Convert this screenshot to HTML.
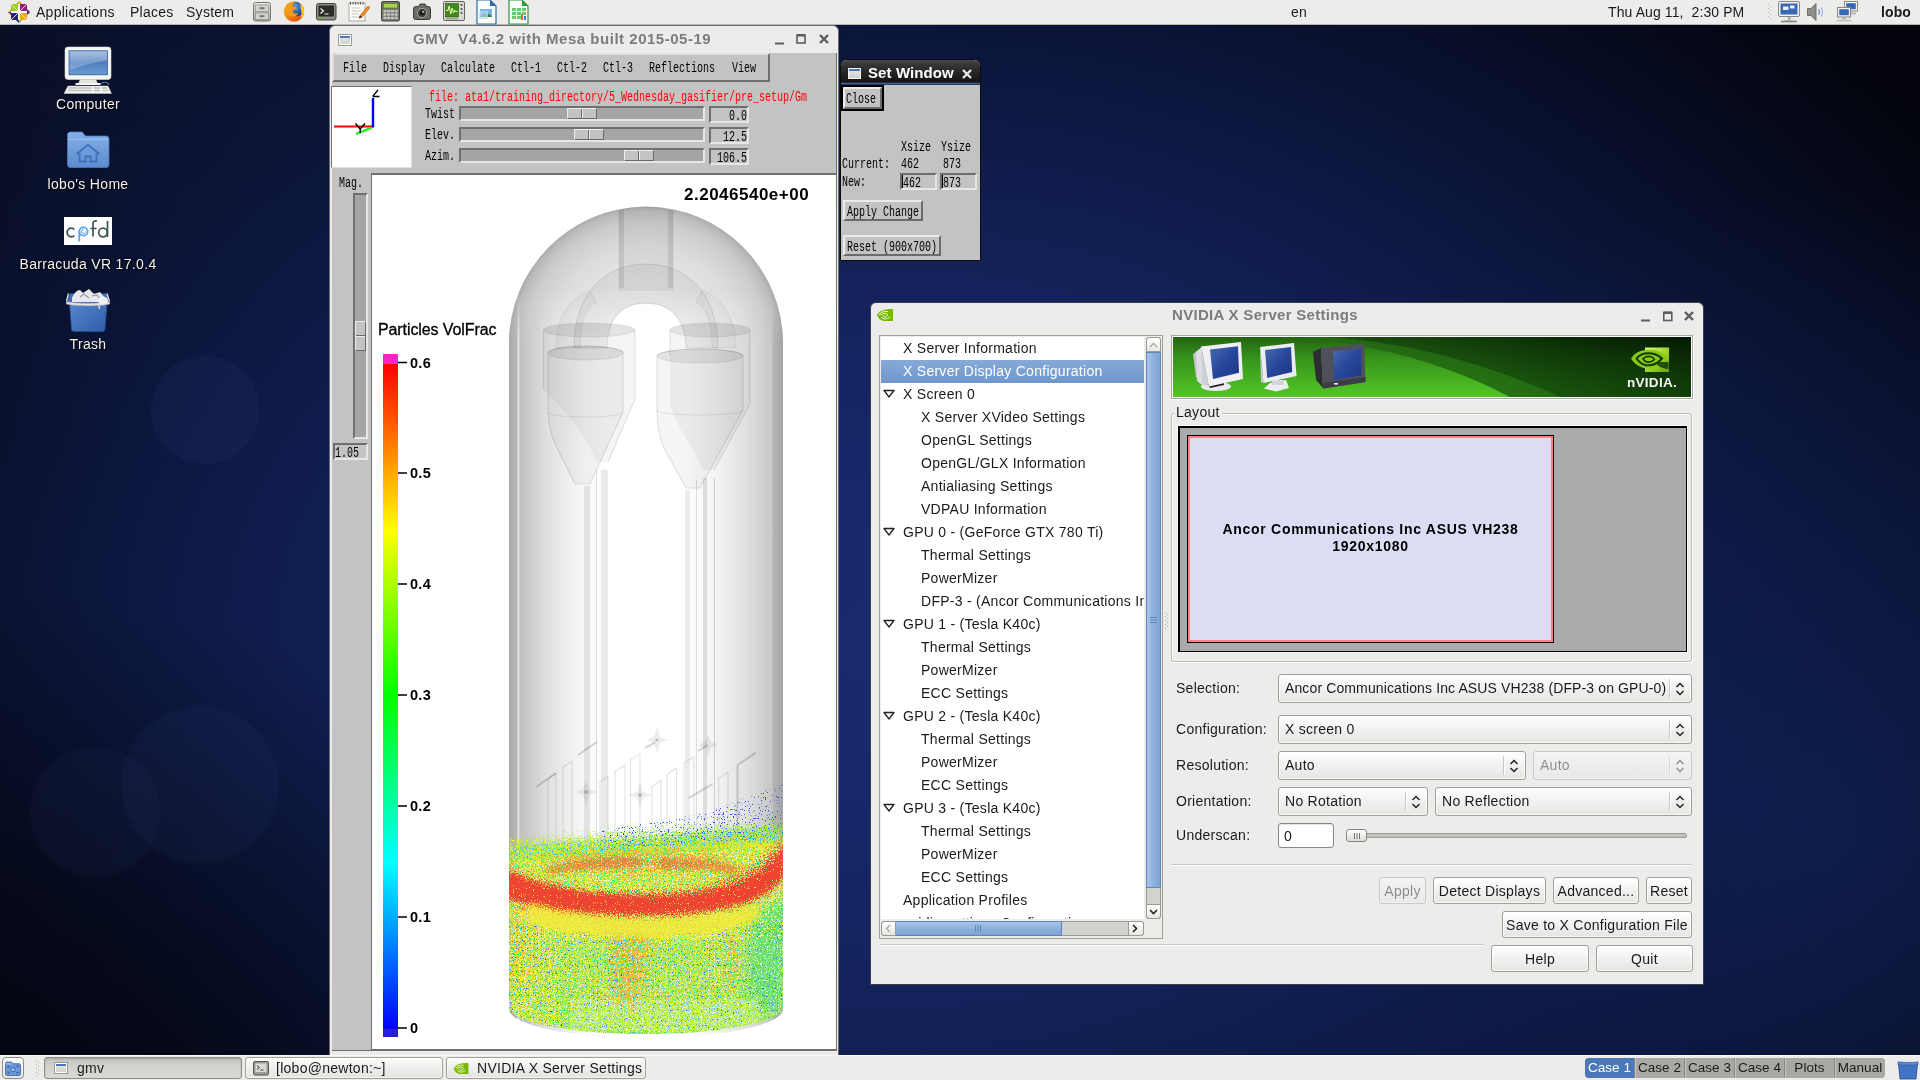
<!DOCTYPE html>
<html><head><meta charset="utf-8"><title>desktop</title>
<style>
*{box-sizing:border-box;margin:0;padding:0}
html,body{width:1920px;height:1080px;overflow:hidden}
body{position:relative;font-family:"Liberation Sans",sans-serif;font-size:14px;letter-spacing:.27px;color:#1a1a1a;
background:#0c1636;}
.abs,.abs *{position:absolute}
.t{white-space:pre;line-height:16px;height:16px}
.b{font-weight:700}
/* background */
#bg{left:0;top:0;width:1920px;height:1080px;
background:
radial-gradient(circle 55px at 205px 410px,rgba(120,150,255,.045) 0,rgba(120,150,255,.045) 96%,transparent 100%),
radial-gradient(circle 80px at 200px 785px,rgba(120,150,255,.04) 0,rgba(120,150,255,.04) 96%,transparent 100%),
radial-gradient(circle 66px at 95px 812px,rgba(120,150,255,.03) 0,rgba(120,150,255,.03) 96%,transparent 100%),
radial-gradient(ellipse 800px 480px at 120px -40px,rgba(16,28,70,.5) 0%,rgba(16,28,70,.25) 50%,rgba(16,28,70,0) 100%),
radial-gradient(ellipse 760px 560px at -60px 1140px,rgba(2,3,10,.85) 0%,rgba(2,3,10,.55) 45%,rgba(2,3,10,0) 100%),
radial-gradient(ellipse 720px 640px at 1830px 830px,rgba(18,36,92,.66) 0%,rgba(16,32,84,.45) 45%,rgba(14,28,74,0) 100%),
radial-gradient(ellipse 1250px 900px at 900px 640px,#192b6c 0%,#17286a 18%,#13225a 40%,#0d1841 62%,#070c22 85%,#03040c 100%);}
#top,#bot,#gmv,#sw,#nv,.dl{will-change:transform}
/* panels */
#top{left:0;top:0;width:1920px;height:25px;background:#edeceb;border-bottom:1px solid #b9b6b0}
#bot{left:0;top:1055px;width:1920px;height:25px;background:#edeceb;border-top:1px solid #f8f8f7}
/* mono bitmap-ish */
.m{font-family:"Liberation Mono",monospace;font-size:14px;letter-spacing:0;white-space:pre;line-height:15px;height:15px;transform:scaleX(.7143);transform-origin:0 0;color:#000}
</style></head><body>
<div id="bg" class="abs"></div>

<!--TOP-->
<div id="top" class="abs">
<span class="t" style="left:36px;top:4px">Applications</span>
<span class="t" style="left:130px;top:4px">Places</span>
<span class="t" style="left:186px;top:4px">System</span>
<span class="t" style="left:1291px;top:4px">en</span>
<span class="t" style="left:1608px;top:4px;letter-spacing:.1px">Thu Aug 11,  2:30 PM</span>
<span class="t b" style="left:1881px;top:4px;letter-spacing:.1px">lobo</span>
<svg style="left:0;top:0" width="540" height="25" viewBox="0 0 540 25">
<defs>
<linearGradient id="gy" x1="0" y1="0" x2="0" y2="1"><stop offset="0" stop-color="#e8e8e6"/><stop offset="1" stop-color="#a8a8a4"/></linearGradient>
<radialGradient id="ff" cx=".4" cy=".35" r=".7"><stop offset="0" stop-color="#5aa0e8"/><stop offset=".6" stop-color="#2a5cb0"/><stop offset="1" stop-color="#1a3a80"/></radialGradient>
<linearGradient id="fx" x1="0" y1="0" x2="1" y2="1"><stop offset="0" stop-color="#ffc820"/><stop offset=".5" stop-color="#f08010"/><stop offset="1" stop-color="#d84008"/></linearGradient>
</defs>
<!-- centos -->
<g transform="translate(19 12)">
<path d="M0-11l3 3h-6zM0 11l3-3h-6zM-11 0l3-3v6zM11 0l-3-3v6z" fill="#9ccd2a"/>
<path d="M-8-8h7v7h-7z" fill="#9ccd2a"/><path d="M1-8h7v7h-7z" fill="#932279"/><path d="M1 1h7v7h-7z" fill="#efa724"/><path d="M-8 1h7v7h-7z" fill="#262577"/>
<path d="M0-11l3 3h-3z M0-11" fill="#efa724"/><path d="M11 0l-3-3v3z" fill="#932279"/><path d="M0 11l-3-3h3z" fill="#262577"/><path d="M-11 0l3 3v-3z" fill="#932279"/><path d="M11 0l-3 3v-3z" fill="#262577"/><path d="M0 11l3-3h-3z" fill="#9ccd2a"/>
<path d="M-8-8l7 7M8-8l-7 7M-8 8l7-7M8 8l-7-7" stroke="#fff" stroke-width="1" opacity=".8"/><path d="M0-8v16M-8 0h16" stroke="#fff" stroke-width=".9" opacity=".9"/>
</g>
<!-- file cabinet -->
<rect x="253.500" y="2.500" width="17" height="18.500" rx="2" fill="url(#gy)" stroke="#77776f"/><rect x="255.500" y="5" width="13" height="6.500" fill="#d4d4d0" stroke="#88887f" stroke-width=".7"/><rect x="255.500" y="13" width="13" height="6.500" fill="#d4d4d0" stroke="#88887f" stroke-width=".7"/><rect x="259.500" y="7.200" width="5" height="2" fill="#77776f"/><rect x="259.500" y="15.200" width="5" height="2" fill="#77776f"/>
<!-- firefox -->
<clipPath id="ffc"><circle cx="294" cy="11.500" r="10.200"/></clipPath>
<circle cx="294" cy="11.500" r="10.200" fill="url(#fx)"/>
<g clip-path="url(#ffc)"><circle cx="296.500" cy="9" r="7.300" fill="url(#ff)"/><path d="M286 6c2-3 6-4.500 9-3-2 1-3 2.500-2.500 4 2-.5 4 .5 4.500 2.500-2.500-.5-4 .500-4 2 .5 2 3 3 5.500 1.500-1 3-5 4.500-8.500 3-3.500-1.500-5-5.500-4-10z" fill="#f29a1c"/><path d="M300 2c3 2 5 6 4.200 10.500-.8 3-2.200 5-4.200 6.500 1.500-3 2-6 1-9-.5-3-.5-5.500-1-8z" fill="#ffc62a"/></g>
<!-- terminal -->
<rect x="316.500" y="3.500" width="19.500" height="16.500" rx="2" fill="#8a8a86" stroke="#44443f"/><rect x="318.500" y="5.500" width="15.500" height="11" fill="#2a2c2a"/><path d="M320.500 8.500l3 2.500-3 2.500M324.500 14h4" stroke="#f0f0f0" stroke-width="1.200" fill="none"/><rect x="319" y="17.600" width="3" height="1.200" fill="#6ac82a"/>
<!-- notepad -->
<rect x="349" y="3" width="16" height="18" fill="#fbfbf8" stroke="#9a9a94" stroke-width=".8"/><path d="M350.500 2v2.500M353 2v2.500M355.500 2v2.500M358 2v2.500M360.500 2v2.500M363 2v2.500" stroke="#55554f" stroke-width="1"/><path d="M351.500 8h8M351.500 11h10M351.500 14h7M351.500 17h9" stroke="#c4c4be" stroke-width="1"/><path d="M360 15.500l8-9.500 2 1.600-8 9.600-2.800 1z" fill="#f08a18" stroke="#b85c08" stroke-width=".6"/><path d="M359.200 18.200l.8-2.700 2 1.700z" fill="#222"/>
<!-- calculator -->
<rect x="381.500" y="1.500" width="18" height="19.500" rx="1.500" fill="#77776f" stroke="#44443f"/><rect x="383.500" y="3.500" width="14" height="4.500" fill="#a4d84a" stroke="#4a6a1a" stroke-width=".6"/><g fill="#c8c8c2"><rect x="383.500" y="10" width="3" height="2.300"/><rect x="387.200" y="10" width="3" height="2.300"/><rect x="390.900" y="10" width="3" height="2.300"/><rect x="394.600" y="10" width="3" height="2.300"/><rect x="383.500" y="13.400" width="3" height="2.300"/><rect x="387.200" y="13.400" width="3" height="2.300"/><rect x="390.900" y="13.400" width="3" height="2.300"/><rect x="394.600" y="13.400" width="3" height="2.300"/><rect x="383.500" y="16.800" width="3" height="2.300"/><rect x="387.200" y="16.800" width="3" height="2.300"/><rect x="390.900" y="16.800" width="3" height="2.300"/><rect x="394.600" y="16.800" width="3" height="2.300"/></g>
<!-- camera -->
<path d="M413.500 8.500c0-1 .8-2 2-2h3l1.500-2.500h5l1.500 2.500h2c1.200 0 2 1 2 2v9c0 1-.8 2-2 2h-13c-1.200 0-2-1-2-2z" fill="#6c6c68" stroke="#3a3a36"/><circle cx="422" cy="13" r="4.600" fill="#3a3a38" stroke="#a8a8a4" stroke-width="1"/><circle cx="422" cy="13" r="2" fill="#111"/><circle cx="423" cy="12" r=".9" fill="#ddd"/>
<!-- sysmon -->
<rect x="443.500" y="1.500" width="21" height="19" rx="1.500" fill="#d8d8d4" stroke="#66665f"/><rect x="445.500" y="3.500" width="13" height="13.500" fill="#3f8a1a" stroke="#2a5a0c" stroke-width=".6"/><path d="M446 10.500h2l1.200-4.500 1.500 8 1.500-6 1.300 5 1.200-3 1 1.500h1.800" stroke="#e8ffb0" stroke-width="1" fill="none"/><g fill="#55554f"><circle cx="461.500" cy="5" r="1.100"/><circle cx="461.500" cy="9" r="1.100"/><circle cx="461.500" cy="13" r="1.100"/></g><path d="M446 18.800h12" stroke="#88887f" stroke-width="1"/>
<!-- doc blue -->
<path d="M477 0h13l6 6v18h-19z" fill="#fdfdfd" stroke="#2a6aa8" stroke-width="1.200"/><path d="M490 0l6 6h-6z" fill="#2a6aa8"/><rect x="480" y="9" width="12" height="8" fill="#7ab4e8"/><path d="M480 17l4-4.500 3 3 2-2 3 3.500z" fill="#3a7a3a"/><rect x="479" y="11" width="9" height="8" fill="#b8d8f4" opacity=".7"/>
<!-- sheet green -->
<path d="M509 0h13l6 6v18h-19z" fill="#fdfdfd" stroke="#2a9a3a" stroke-width="1.200"/><path d="M522 0l6 6h-6z" fill="#2a9a3a"/><g fill="#6ac86a"><rect x="512" y="8" width="4" height="3"/><rect x="517" y="8" width="4" height="3"/><rect x="522" y="8" width="4" height="3"/><rect x="512" y="12" width="4" height="3"/><rect x="517" y="12" width="4" height="3"/><rect x="522" y="12" width="4" height="3"/><rect x="512" y="16" width="4" height="3"/><rect x="517" y="16" width="4" height="3"/></g><rect x="521" y="14" width="2" height="6" fill="#e86a2a"/><rect x="524" y="16" width="2" height="4" fill="#3a7ae8"/>
</svg>
<svg style="left:1760px;top:0" width="110" height="25" viewBox="1760 0 110 25">
<g fill="#b8b6b0"><rect x="1768" y="4" width="1" height="1"/><rect x="1770" y="6" width="1" height="1"/><rect x="1768" y="8" width="1" height="1"/><rect x="1770" y="10" width="1" height="1"/><rect x="1768" y="12" width="1" height="1"/><rect x="1770" y="14" width="1" height="1"/><rect x="1768" y="16" width="1" height="1"/><rect x="1770" y="18" width="1" height="1"/></g>
<rect x="1778.500" y="1.500" width="21" height="15" rx="1.500" fill="#f2f2f0" stroke="#88887f"/><rect x="1780.500" y="3.500" width="17" height="11" fill="#3a68b4"/><rect x="1783" y="6.500" width="5.500" height="3.500" fill="#e8eef8"/><rect x="1790" y="5.500" width="4.500" height="3" fill="#e8eef8"/><path d="M1788 17h2.500v3h-2.500z" fill="#a8a8a4"/><path d="M1781 21.500h16" stroke="#88887f" stroke-width="1.600"/><path d="M1784 20.500h10" stroke="#b8b8b4" stroke-width="1"/>
<path d="M1807.500 8.500h3.500l5-5v17l-5-5h-3.500z" fill="#8e8e8a" stroke="#5a5a56" stroke-width=".8"/><path d="M1818.500 9.500c1.200 1.500 1.200 3.500 0 5" stroke="#6a94d4" stroke-width="1.300" fill="none"/><path d="M1821 7.500c2 2.500 2 6.500 0 9" stroke="#6a94d4" stroke-width="1.200" fill="none" opacity=".6"/>
<rect x="1844.500" y="1.500" width="13" height="9.500" fill="#f2f2f0" stroke="#88887f"/><rect x="1846.200" y="3.200" width="9.600" height="6" fill="#3a68b4"/><path d="M1848 13.500h8" stroke="#b8b8b4" stroke-width="2"/>
<rect x="1837.500" y="7.500" width="13" height="9.500" fill="#f2f2f0" stroke="#88887f"/><rect x="1839.200" y="9.200" width="9.600" height="6" fill="#3a68b4"/><path d="M1842.500 17.500h3v2h-3z" fill="#a8a8a4"/><path d="M1837 20.500h14" stroke="#c4c4c0" stroke-width="2"/>
</svg>

</div>

<style>
.dl{position:absolute;white-space:pre;color:#f2f2f2;font-size:14px;letter-spacing:.33px;line-height:16px;height:16px;text-align:center;text-shadow:1px 1px 1px #000,0 0 2px #000}
</style>
<svg class="abs" style="position:absolute;left:60px;top:44px" width="56" height="54" viewBox="60 44 56 54">
<defs><linearGradient id="cs" x1="0" y1="0" x2="0" y2="1"><stop offset="0" stop-color="#8fb0d8"/><stop offset=".5" stop-color="#4f7fc0"/><stop offset="1" stop-color="#6d9ad0"/></linearGradient></defs>
<rect x="65" y="47" width="46" height="32.500" rx="3" fill="#f6f6f4" stroke="#d8d8d4" stroke-width=".6"/>
<rect x="69" y="50.800" width="38.400" height="24" fill="url(#cs)" stroke="#2f5a9a" stroke-width=".8"/>
<path d="M69.400 51.200h37.600v9C95 62 82 66 69.400 70z" fill="#fff" fill-opacity=".22"/>
<path d="M80 79.500h16l2 4.500h-20z" fill="#e4e4e0"/><rect x="75.500" y="83" width="25" height="2" fill="#f4f4f2"/>
<path d="M68 86h40l3.500 7.500h-47.500z" fill="#f4f4f2" stroke="#c8c8c4" stroke-width=".5"/>
<path d="M68.500 88h23M68 90.500h24M94 88h6M94 90.500h6M102 88h5M102.500 90.500h6" stroke="#c0c0bc" stroke-width="1.400"/>
<path d="M101 84c2-3 8-2 8 1" stroke="#6a90c8" stroke-width="1" fill="none"/>
</svg>
<span class="dl" style="left:28px;width:120px;top:96px">Computer</span>
<svg style="position:absolute;left:64px;top:130px" width="48" height="40" viewBox="64 130 48 40">
<defs><linearGradient id="fo" x1="0" y1="0" x2="0" y2="1"><stop offset="0" stop-color="#86b0e6"/><stop offset="1" stop-color="#5c8cd0"/></linearGradient></defs>
<path d="M67.500 135c0-2 1-3 3-3h11.500l3.500 4h20.500c2 0 3 1 3 3v25.500c0 2-1 3-3 3h-35.500c-2 0-3-1-3-3z" fill="url(#fo)" stroke="#4a78bc" stroke-width=".8"/>
<path d="M68 139.500h40.500" stroke="#a8c8f0" stroke-width="1" opacity=".7"/>
<path d="M76.500 154l11.500-9 11.500 9M79.500 153v8.500h6v-5h5v5h6v-8.500" fill="none" stroke="#4070b8" stroke-width="1.800"/>
</svg>
<span class="dl" style="left:28px;width:120px;top:176px">lobo's Home</span>
<div style="position:absolute;left:64px;top:217px;width:48px;height:28px;background:#fff"></div>
<svg style="position:absolute;left:64px;top:217px" width="48" height="28" viewBox="64 217 48 28">
<g fill="none" stroke="#3c5454" stroke-width="1.700"><path d="M74.500 229.500a4.300 4.300 0 1 0 0 6"/><path d="M93 236.500v-12.500c0-2.500 1.500-3.500 4-3M90.500 228.500h6"/><circle cx="103" cy="232.500" r="4.300"/><path d="M107.500 221v16"/></g>
<g fill="none" stroke="#5aa4f0" stroke-width="1.800"><circle cx="83.500" cy="231.500" r="4.200"/><path d="M79.300 231.500v10"/><path d="M83.500 229.500a2 2 0 1 0 2 2" stroke-width="1"/></g>
</svg>
<span class="dl" style="left:8px;width:160px;top:256px">Barracuda VR 17.0.4</span>
<svg style="position:absolute;left:62px;top:286px" width="52" height="48" viewBox="62 286 52 48">
<defs><linearGradient id="tr" x1="0" y1="0" x2="1" y2="1"><stop offset="0" stop-color="#5a8cd4"/><stop offset="1" stop-color="#2f5ca6"/></linearGradient></defs>
<path d="M69 296h38.500l-2.500 33c0 1.500-1 2.500-2.500 2.500h-28.500c-1.500 0-2.500-1-2.500-2.500z" fill="url(#tr)" stroke="#2a4f90" stroke-width=".8"/>
<path d="M70 293.500h36.500l2.500 9h-42z" fill="#3f6eb8"/>
<path d="M72 298c2-5 5-8 8-8l3 3 6-4 5 5 6-2 5 6-3 4-30 0z" fill="#e8e8ec"/><path d="M80 297l4-3 5 4M92 296l5-1 3 4" stroke="#9a9aa4" stroke-width="1.200" fill="none"/>
<path d="M66.500 301.500l2-8M109.500 301.500l-2.500-8" stroke="#dcdcdc" stroke-width="1.400"/>
<path d="M66.500 301.500c10 2.500 33 2.500 43 0l.3 2.500c-10 2.500-33 2.500-43.600 0z" fill="#e4e4e8" stroke="#a0a0a8" stroke-width=".5"/>
<ellipse cx="103" cy="300.500" rx="5" ry="4" fill="#f0f0f4"/><path d="M98.500 303l1 6" stroke="#e0e0e4" stroke-width="1.500"/>
</svg>
<span class="dl" style="left:28px;width:120px;top:336px">Trash</span>


<style>
#gmv{left:329px;top:25px;width:510px;height:1030px;background:#edeceb;border:1px solid #6a6c74;border-bottom:none;border-radius:6px 6px 0 0;overflow:hidden}
#gmv .c{left:2px;top:27px;width:505px;height:998px;background:#c3c3c3;border-bottom:1px solid #6e6e6e;border-right:1px solid #6e6e6e}
.wt{font-weight:700;font-size:15px;letter-spacing:.52px;color:#7c7c7c;white-space:pre;line-height:18px;height:18px}
.tro{background:#a5a5a5;border:2px solid;border-color:#707070 #e6e6e6 #e6e6e6 #707070}
.hnd{background:#c3c3c3;border:1px solid;border-color:#ececec #6a6a6a #6a6a6a #ececec}
.hnd i{left:50%;top:0;height:100%;width:2px;margin-left:-1px;background:#6a6a6a;border-right:1px solid #ececec}
.vb{background:#c3c3c3;border:2px solid;border-color:#6e6e6e #e6e6e6 #e6e6e6 #6e6e6e}
.wicon{width:12px;height:10px;border:1px solid #fff;outline:1px solid #9a9a9a;background:linear-gradient(#4c78b8 0,#4c78b8 2px,#dfe3dc 2px,#cfd3cc 100%)}
</style>
<div id="gmv" class="abs">
 <div class="wicon" style="left:9px;top:9px"></div>
 <span class="wt" style="left:83px;top:4px">GMV  V4.6.2 with Mesa built 2015-05-19</span>
 <svg style="left:440px;top:4px" width="66" height="20" viewBox="0 0 66 20"><g stroke="#5c5c5c" stroke-width="2" fill="none"><path d="M5 13.5h9"/><rect x="27" y="5" width="8" height="8" stroke-width="1.6"/><path d="M27 5.3h8" stroke-width="2.4"/><path d="M50 5l8 8M58 5l-8 8" stroke-width="2.4"/></g></svg>
 <div class="c">
  <!-- menubar : abs coords relative to c (c origin = 332,53) -->
  <div style="left:0;top:0;width:438px;height:29px;background:#c3c3c3;border:2px solid;border-color:#dedede #6e6e6e #6e6e6e #dedede"></div>
  <span class="m" style="left:11px;top:8px">File</span>
  <span class="m" style="left:51px;top:8px">Display</span>
  <span class="m" style="left:109px;top:8px">Calculate</span>
  <span class="m" style="left:179px;top:8px">Ctl-1</span>
  <span class="m" style="left:225px;top:8px">Ctl-2</span>
  <span class="m" style="left:271px;top:8px">Ctl-3</span>
  <span class="m" style="left:317px;top:8px">Reflections</span>
  <span class="m" style="left:400px;top:8px">View</span>
  <!-- axes -->
  <div style="left:-1px;top:33px;width:81px;height:82px;background:#fff;border:1px solid;border-color:#707070 #e0e0e0 #e0e0e0 #707070"></div>
  <svg style="left:0;top:34px" width="79" height="80" viewBox="332 87 79 80"><path d="M334 126.5h39" stroke="#f00" stroke-width="2"/><path d="M373 98v29.5" stroke="#00f" stroke-width="2.4"/><path d="M356 134l16-6.5" stroke="#0f0" stroke-width="2"/><path d="M355.5 123.5l4.7 5.5v4M365 123.5l-4.8 5.5" stroke="#000" stroke-width="1.5" fill="none"/><path d="M372.5 96.5h7M373 96l5-6" stroke="#000" stroke-width="1.3" fill="none"/></svg>
  <span class="m" style="left:97px;top:37px;color:#f00">file: ata1/training_directory/5_Wednesday_gasifier/pre_setup/Gm</span>
  <span class="m" style="left:93px;top:54px">Twist</span>
  <span class="m" style="left:93px;top:75px">Elev.</span>
  <span class="m" style="left:93px;top:96px">Azim.</span>
  <div class="tro" style="left:127px;top:53px;width:246px;height:15px"></div>
  <div class="tro" style="left:127px;top:74px;width:246px;height:15px"></div>
  <div class="tro" style="left:127px;top:95px;width:246px;height:15px"></div>
  <div class="hnd" style="left:235px;top:55px;width:30px;height:11px"><i></i></div>
  <div class="hnd" style="left:242px;top:76px;width:30px;height:11px"><i></i></div>
  <div class="hnd" style="left:292px;top:97px;width:30px;height:11px"><i></i></div>
  <div class="vb" style="left:377px;top:53px;width:40px;height:17px"></div>
  <div class="vb" style="left:377px;top:74px;width:40px;height:17px"></div>
  <div class="vb" style="left:377px;top:95px;width:40px;height:17px"></div>
  <span class="m" style="left:397px;top:56px">0.0</span>
  <span class="m" style="left:391px;top:77px">12.5</span>
  <span class="m" style="left:385px;top:98px">106.5</span>
  <!-- mag -->
  <span class="m" style="left:7px;top:123px">Mag.</span>
  <div class="tro" style="left:21px;top:140px;width:15px;height:246px"></div>
  <div class="hnd" style="left:23px;top:268px;width:11px;height:30px"><i style="left:0;top:50%;width:100%;height:2px;margin:-1px 0 0 0;border-right:none;border-bottom:1px solid #ececec"></i></div>
  <div class="vb" style="left:1px;top:390px;width:35px;height:17px"></div>
  <span class="m" style="left:3px;top:393px">1.05</span>
  <!-- canvas : 372..835 x 175..1049 -->
  <div style="left:39px;top:120px;width:466px;height:877px;border:1px solid #707070;border-top-width:2px;background:#fff"></div>
  <div id="cv" style="left:40px;top:122px;width:463px;height:874px;overflow:hidden">
<svg style="left:0;top:0" width="463" height="874" viewBox="372 175 463 874">
<defs>
 <linearGradient id="cy" x1="509" x2="783" y1="0" y2="0" gradientUnits="userSpaceOnUse">
  <stop offset="0" stop-color="#a9a9a9"/><stop offset=".03" stop-color="#b7b7b7"/><stop offset=".033" stop-color="#f4f4f4"/><stop offset=".04" stop-color="#c0c0c0"/>
  <stop offset=".14" stop-color="#e0e0e0"/><stop offset=".21" stop-color="#eeeeee"/><stop offset=".28" stop-color="#f9f9f9"/><stop offset=".36" stop-color="#ffffff"/>
  <stop offset=".64" stop-color="#ffffff"/><stop offset=".75" stop-color="#f4f4f4"/><stop offset=".86" stop-color="#e2e2e2"/><stop offset=".96" stop-color="#c6c6c6"/>
  <stop offset=".965" stop-color="#b4b4b4"/><stop offset="1" stop-color="#a4a4a4"/>
 </linearGradient>
 <radialGradient id="dm" cx="646" cy="343" r="137" gradientUnits="userSpaceOnUse">
  <stop offset="0" stop-color="#f2f2f2"/><stop offset=".45" stop-color="#e8e8e8"/><stop offset=".7" stop-color="#dcdcdc"/><stop offset=".88" stop-color="#cccccc"/><stop offset=".96" stop-color="#bcbcbc"/><stop offset="1" stop-color="#aaaaaa"/>
 </radialGradient>
 <linearGradient id="cb" x1="0" x2="0" y1="364" y2="1029" gradientUnits="userSpaceOnUse">
  <stop offset="0" stop-color="#ff0000"/><stop offset=".25" stop-color="#ffff00"/><stop offset=".5" stop-color="#00ff00"/><stop offset=".75" stop-color="#00ffff"/><stop offset="1" stop-color="#0000ff"/>
 </linearGradient>
 <linearGradient id="fm" x1="0" x2="0" y1="290" y2="344" gradientUnits="userSpaceOnUse"><stop offset="0" stop-color="#fff" stop-opacity="0"/><stop offset="1" stop-color="#fff" stop-opacity="1"/></linearGradient>
 <mask id="fmk" maskUnits="userSpaceOnUse" x="500" y="280" width="300" height="70"><rect x="500" y="280" width="300" height="70" fill="url(#fm)"/></mask>
 <clipPath id="dc"><path d="M509 344A137 137 0 0 1 783 344Z"/></clipPath>
 <clipPath id="vc"><path d="M509 760V1007A137 27 0 0 0 783 1007V760Z"/></clipPath>
 <filter id="sp" x="480" y="740" width="340" height="320" filterUnits="userSpaceOnUse" color-interpolation-filters="sRGB">
  <feTurbulence type="fractalNoise" baseFrequency="0.71 0.83" numOctaves="2" seed="4" result="n"/>
  <feDisplacementMap in="SourceGraphic" in2="n" scale="44" xChannelSelector="R" yChannelSelector="G"/>
 </filter>
 <filter id="sp2" x="480" y="740" width="340" height="320" filterUnits="userSpaceOnUse" color-interpolation-filters="sRGB">
  <feGaussianBlur stdDeviation="1.6" result="b"/>
  <feTurbulence type="fractalNoise" baseFrequency="0.77 0.69" numOctaves="2" seed="9" result="n"/>
  <feDisplacementMap in="b" in2="n" scale="20" xChannelSelector="G" yChannelSelector="R"/>
 </filter>
 <filter id="bl" x="480" y="740" width="340" height="320" filterUnits="userSpaceOnUse"><feGaussianBlur stdDeviation="3"/></filter>
 <filter id="d1" x="480" y="740" width="340" height="320" filterUnits="userSpaceOnUse" color-interpolation-filters="sRGB"><feTurbulence type="fractalNoise" baseFrequency="0.73 0.81" numOctaves="1" seed="11" result="n"/><feColorMatrix in="n" type="matrix" values="0 0 0 0 0  0 0 0 0 0  0 0 0 0 0  16 0 0 0 -9.200" result="a"/><feComposite in="SourceGraphic" in2="a" operator="in"/></filter>
<filter id="d2" x="480" y="740" width="340" height="320" filterUnits="userSpaceOnUse" color-interpolation-filters="sRGB"><feTurbulence type="fractalNoise" baseFrequency="0.79 0.67" numOctaves="1" seed="23" result="n"/><feColorMatrix in="n" type="matrix" values="0 0 0 0 0  0 0 0 0 0  0 0 0 0 0  0 16 0 0 -9.360" result="a"/><feComposite in="SourceGraphic" in2="a" operator="in"/></filter>
<filter id="d3" x="480" y="740" width="340" height="320" filterUnits="userSpaceOnUse" color-interpolation-filters="sRGB"><feTurbulence type="fractalNoise" baseFrequency="0.69 0.77" numOctaves="1" seed="37" result="n"/><feColorMatrix in="n" type="matrix" values="0 0 0 0 0  0 0 0 0 0  0 0 0 0 0  0 0 16 0 -10.080" result="a"/><feComposite in="SourceGraphic" in2="a" operator="in"/></filter>
<filter id="d4" x="480" y="740" width="340" height="320" filterUnits="userSpaceOnUse" color-interpolation-filters="sRGB"><feTurbulence type="fractalNoise" baseFrequency="0.83 0.71" numOctaves="1" seed="51" result="n"/><feColorMatrix in="n" type="matrix" values="0 0 0 0 0  0 0 0 0 0  0 0 0 0 0  16 0 0 0 -9.600" result="a"/><feComposite in="SourceGraphic" in2="a" operator="in"/></filter>
<filter id="d5" x="480" y="740" width="340" height="320" filterUnits="userSpaceOnUse" color-interpolation-filters="sRGB"><feTurbulence type="fractalNoise" baseFrequency="0.75 0.87" numOctaves="1" seed="77" result="n"/><feColorMatrix in="n" type="matrix" values="0 0 0 0 0  0 0 0 0 0  0 0 0 0 0  0 16 0 0 -10.560" result="a"/><feComposite in="SourceGraphic" in2="a" operator="in"/></filter>
</defs>
<!-- shell -->
<path d="M509 343.5A137 137 0 0 1 783 343.5Z" fill="url(#dm)"/>
<path d="M509 343V1009A137 29 0 0 0 783 1009V343Z" fill="url(#cy)"/>
<g clip-path="url(#dc)"><rect x="509" y="285" width="274" height="59" fill="url(#cy)" mask="url(#fmk)"/></g>
<!-- outlet pipe + arch ducts -->
<g fill="#000" stroke="#000" stroke-width="1">
 <path d="M619 211C630 206 662 206 673 211V290H619Z" fill-opacity=".035" stroke-opacity=".05"/>
 <path d="M619 211l5-1v78h-5zM673 211l-5-1v78h5z" fill-opacity=".09" stroke="none"/>
 <path d="M574 348C574 292 606 264 646 264C686 264 718 292 718 348L686 348C686 318 670 303 646 303C622 303 607 318 607 348Z" fill-opacity=".05" stroke-opacity=".1"/>
 <path d="M556 348C556 312 574 296 590 290L596 302C586 308 580 322 580 348Z" fill-opacity=".03" stroke-opacity=".06"/>
 <path d="M736 348C736 312 718 296 702 290L696 302C706 308 712 322 712 348Z" fill-opacity=".03" stroke-opacity=".06"/>
</g>
<path d="M608 352C608 318 622 304 646 304C670 304 685 318 685 352Z" fill="#fff" fill-opacity=".92"/>
<!-- cyclones -->
<g fill="#000" fill-opacity=".04" stroke="#000" stroke-opacity=".1" stroke-width="1.2">
 <!-- left back -->
 <path d="M543.5 330A45.7 7 0 0 1 635 330V399L608 462H596C590 440 560 405 543.5 390Z" stroke="none"/><path d="M543.5 330V390M635 330V399L608 462" fill="none"/>
 <ellipse cx="589.2" cy="330" rx="45.7" ry="7" fill-opacity=".07" stroke-opacity=".06"/>
 <!-- left front -->
 <path d="M548 353A37.5 7 0 0 1 623 353V412L590 484H575L556 446Q549 432 548 412Z"/>
 <ellipse cx="585.5" cy="353" rx="37.5" ry="7" fill-opacity=".07" stroke-opacity=".06"/>
 <path d="M548 412A37.5 5 0 0 0 623 412" fill="none" stroke-opacity=".07"/>
 <!-- right back -->
 <path d="M670 330A40 7 0 0 1 750 330V404L714 470H703C696 450 674 425 670 404Z" stroke="none"/><path d="M670 330V356M750 330V404L714 470" fill="none"/>
 <ellipse cx="710" cy="330" rx="40" ry="7" fill-opacity=".07" stroke-opacity=".06"/>
 <!-- right front -->
 <path d="M657 356A43 7 0 0 1 743 356V410L700 488H686L663 446Q657 430 657 410Z"/>
 <ellipse cx="700" cy="356" rx="43" ry="7" fill-opacity=".07" stroke-opacity=".06"/>
 <path d="M657 410A43 5 0 0 0 743 410" fill="none" stroke-opacity=".07"/>
</g>
<rect x="636" y="336" width="20" height="120" fill="#fff"/>
<!-- diplegs -->
<g fill="#000">
 <rect x="584" y="486" width="6" height="360" fill-opacity=".09"/><rect x="596" y="470" width="1" height="376" fill-opacity=".12"/><rect x="601" y="470" width="7" height="376" fill-opacity=".08"/>
 <rect x="685" y="490" width="5" height="360" fill-opacity=".07"/><rect x="696" y="480" width="1" height="370" fill-opacity=".12"/><rect x="703" y="478" width="4" height="372" fill-opacity=".1"/><rect x="714" y="478" width="1" height="372" fill-opacity=".16"/>
</g>
<!-- lances -->
<g stroke="#000" stroke-opacity=".11" stroke-width="1.1" fill="none"><path d="M548 779V862M556 773V862M547 780L556 773M563 767V862M572 761V862M562 768L572 761M600 782V862M608 776V862M599 783L608 776M615 771V862M625 765V862M614 772L625 765M630.5 759.6V862M640 753.6V862M629.5 760.6L640 753.6M652 786V862M661 780V862M651 787L661 780M667 774V862M676.5 768V862M666 775L676.5 768M684 762.7V862M694 756.7V862M683 763.7L694 756.7M718.7 778V862M728 772V862M717.7 779L728 772"/></g>
<g stroke="#000" stroke-opacity=".16" stroke-width="2" fill="none"><path d="M536 787L556 773M578 755L597 742M645 748L655 742.5M698 751L708 745M689 798L712.5 784M737.5 765L755.5 752.8M737.5 765V850"/></g>
<g fill="#000" fill-opacity=".07"><path d="M586 780l3 9 8 3-8 3-3 11-3-11-8-3 8-3zM640 783l3 9 9 3-9 3-3 11-3-11-9-3 9-3zM657 727l3 10 8 3-8 3-3 10-3-10-8-3 8-3zM708 734l3 8 7 3-7 3-3 9-3-9-7-3 7-3z"/></g>
<g fill="#000" fill-opacity=".2"><circle cx="586" cy="792" r="2"/><circle cx="640" cy="795" r="2"/><circle cx="657" cy="740" r="1.600"/></g>
<!-- bed -->
<g clip-path="url(#vc)">
 <g filter="url(#sp)">
  <g filter="url(#bl)">
   <path d="M509 846C560 842 620 838 700 832L783 828V1045H509Z" fill="#a6e644"/>
   <path d="M509 856C600 850 700 846 783 840V1045H509Z" fill="#dcea3c"/>
   <path d="M545 863C600 853 690 853 735 860C700 872 600 876 545 863Z" fill="#f0923a"/>
   <path d="M505 868C540 888 600 895 646 895C700 895 755 875 787 838V868C770 900 700 916 646 916C600 916 540 912 505 898Z" fill="#ee4030"/>
   <path d="M505 900C540 914 600 918 646 918C700 918 760 902 787 870V900C760 930 700 940 646 940C600 940 540 934 505 924Z" fill="#f2e838"/>
   <path d="M505 930C540 942 600 948 646 948C700 948 760 936 787 908V1045H505Z" fill="#d2e83c"/>
   <path d="M748 915L787 890V1010L748 1020Z" fill="#6fe068"/>
   <path d="M505 905L530 912V990L505 985Z" fill="#f0d038"/>
   <path d="M614 930C640 922 656 930 652 945C642 960 640 1000 634 1010H616C616 990 608 955 614 930Z" fill="#f2bc36"/>
   <path d="M727 935h10v50h-10z" fill="#f0c040"/>
   <path d="M540 1000C600 1012 700 1012 760 1000V1045H540Z" fill="#c8ec40"/>
  </g>
 </g>
 <rect x="505" y="846" width="282" height="200" fill="#4fe24a" filter="url(#d1)"/>
 <rect x="505" y="838" width="282" height="205" fill="#f6f03a" filter="url(#d2)"/>
 <rect x="505" y="850" width="282" height="195" fill="#3fe0c8" filter="url(#d3)"/>
 <path d="M505 862L787 846V1045H505Z" fill="#ffffff" fill-opacity=".9" filter="url(#d4)"/>
 <path d="M505 925L787 900V1045H505Z" fill="#3a62e6" filter="url(#d5)"/>
 <path d="M560 940H780V1040H560Z" fill="#48e6c0" filter="url(#d2)" opacity=".55"/>
 <path d="M570 1000H760V1030H570Z" fill="#e8fff4" filter="url(#d1)" opacity=".8"/>
<g filter="url(#sp2)"><path d="M505 870C540 886 585 895 646 895C690 895 730 890 756 874C768 866 778 856 787 843V872C778 886 765 896 745 903C715 912 690 914 646 915C600 915 540 910 505 897Z" fill="#ee4232"/>
 <path d="M530 902C570 914 610 918 646 918C690 918 730 914 760 904V918C730 932 690 938 646 938C600 938 560 934 530 924Z" fill="#f4ea3a" fill-opacity=".8"/>
 <path d="M540 870C570 860 600 857 640 858L640 866C610 866 580 868 556 874Z" fill="#ee5a34" fill-opacity=".6"/>
 <path d="M660 860C700 859 725 862 742 868L730 874C710 869 690 867 660 868Z" fill="#ee5a34" fill-opacity=".6"/></g>
 <path d="M505 860H787V920H505Z" fill="#f4ea3c" filter="url(#d5)"/>
 <!-- sparse top -->
 <path d="M600 830L700 814L783 784V838L600 850Z" fill="#2c4fe0" filter="url(#d3)"/>
 <path d="M515 846L783 826V842L515 858Z" fill="#35c8e0" filter="url(#d1)"/>
 <path d="M515 840L783 820V836L515 852Z" fill="#6fe060" filter="url(#d5)"/>
</g>
<!-- colorbar -->
<rect x="383" y="354" width="15" height="10" fill="#ff22c8"/>
<rect x="383" y="364" width="15" height="665" fill="url(#cb)"/>
<rect x="383" y="1029" width="15" height="8" fill="#2a1fd0"/>
<g stroke="#000" stroke-width="1.4"><path d="M398 362.5h9M398 473h9M398 584h9M398 695h9M398 806h9M398 917h9M398 1028h9"/></g>
<g font-family="Liberation Sans" font-weight="700" font-size="14.5" fill="#000">
 <text x="410" y="367.5">0.6</text><text x="410" y="478">0.5</text><text x="410" y="589">0.4</text><text x="410" y="700">0.3</text><text x="410" y="811">0.2</text><text x="410" y="922">0.1</text><text x="410" y="1033">0</text>
</g>
<text x="378" y="335" font-family="Liberation Sans" font-size="16" fill="#000" stroke="#000" stroke-width=".3" letter-spacing="-.1">Particles VolFrac</text>
<text x="684" y="200" font-family="Liberation Sans" font-weight="700" font-size="17" fill="#000" letter-spacing=".5">2.2046540e+00</text>
</svg>

  </div>
 </div>
</div>


<style>
#sw{left:840px;top:59px;width:141px;height:202px;background:#c3c3c3;border:1px solid #0c0c0c;border-radius:7px 7px 0 0;overflow:hidden}
#sw .tb{left:0;top:0;width:139px;height:25px;background:linear-gradient(#4a4a4a 0,#3a3a3a 3px,#2b2b2b 10px,#191919 19px,#141414 22px,#3d5f95 23.5px,#1c2a44 25px)}
.mb{background:#c3c3c3;border:2px solid;border-color:#ebebeb #6b6b6b #6b6b6b #ebebeb}
</style>
<div id="sw" class="abs">
 <div class="tb"></div>
 <div class="wicon" style="left:7px;top:8px;width:13px;height:11px;outline:none;border-color:#f4f4f4"></div>
 <span class="t b" style="left:27px;top:4px;color:#fff;font-size:15px;letter-spacing:.1px;line-height:18px;height:18px">Set Window</span>
 <svg style="left:120px;top:8px" width="12" height="12" viewBox="0 0 12 12"><path d="M2 2l8 8M10 2l-8 8" stroke="#e8e8e8" stroke-width="2.4"/></svg>
 <!-- content origin = (841,60) -->
 <div style="left:0;top:25px;width:43px;height:26px;background:#000"></div>
 <div class="mb" style="left:2px;top:27px;width:39px;height:22px"></div>
 <span class="m" style="left:5px;top:32px">Close</span>
 <span class="m" style="left:60px;top:80px">Xsize</span><span class="m" style="left:100px;top:80px">Ysize</span>
 <span class="m" style="left:1px;top:97px">Current:</span><span class="m" style="left:60px;top:97px">462</span><span class="m" style="left:102px;top:97px">873</span>
 <span class="m" style="left:1px;top:115px">New:</span>
 <div class="vb" style="left:59px;top:113px;width:37px;height:17px"></div><div class="vb" style="left:99px;top:113px;width:37px;height:17px"></div>
 <span class="m" style="left:62px;top:116px">462</span><span class="m" style="left:102px;top:116px">873</span>
 <div style="left:61px;top:115px;width:1px;height:13px;background:#000"></div><div style="left:101px;top:115px;width:1px;height:13px;background:#000"></div>
 <div class="mb" style="left:2px;top:140px;width:80px;height:21px"></div>
 <span class="m" style="left:6px;top:145px">Apply Change</span>
 <div class="mb" style="left:2px;top:175px;width:98px;height:21px"></div>
 <span class="m" style="left:6px;top:180px">Reset (900x700)</span>
</div>


<style>
#nv{left:870px;top:302px;width:834px;height:683px;background:#edeceb;border:1px solid #3c3f4a;border-radius:6px 6px 0 0;overflow:hidden}
#nv .t{font-size:14px}
.cb{border:1px solid #a19f9a;border-radius:3px;background:linear-gradient(#ffffff,#f3f2f1 45%,#e6e5e3);box-shadow:inset 0 0 0 1px rgba(255,255,255,.7)}
.cb .t{left:6px;top:5px}
.cb i{right:20px;top:4px;width:1px;bottom:4px;background:#c9c7c3;border-right:1px solid #fff;width:2px}
.cb svg{right:6px;top:7px}
.dis{opacity:.45}
.bt{border:1px solid #a19f9a;border-radius:3px;background:linear-gradient(#ffffff,#f3f2f1 45%,#e6e5e3);text-align:center;box-shadow:inset 0 0 0 1px rgba(255,255,255,.7)}
.bt .t{left:0;right:0;top:5px;text-align:center}
</style>
<div id="nv" class="abs">
<svg style="left:6px;top:6px" width="17" height="13" viewBox="0 0 17 13"><path d="M0 6C3 1 8 0 16 0V12H6C3 11 1 9 0 6Z" fill="#76b900"/><path d="M2 6C4 3 7 2 11 2.5M3.5 6.5C5 4.5 8 4 10 5C11 6 10 8 8 8C6.5 8 6 7 6.5 6M4 8C6 10.5 10 10.5 13 8" stroke="#fff" stroke-width="1" fill="none" opacity=".9"/></svg>
<span class="wt" style="left:301px;top:3px;letter-spacing:.3px">NVIDIA X Server Settings</span>
<svg style="left:765px;top:4px" width="66" height="20" viewBox="0 0 66 20"><g stroke="#5c5c5c" stroke-width="2" fill="none"><path d="M5 13.5h9"/><rect x="27.8" y="5.5" width="8" height="8" stroke-width="1.6"/><path d="M27.8 5.8h8" stroke-width="2.4"/><path d="M49 5l8 8M57 5l-8 8" stroke-width="2.4"/></g></svg>
<div style="left:8px;top:32px;width:284px;height:604px;border:1px solid #a09e99;background:#edeceb"></div>
<div style="left:10px;top:34px;width:263px;height:582px;background:#fff;overflow:hidden">
<span class="t" style="left:22px;top:3px;color:#1a1a1a">X Server Information</span>
<div style="left:0;top:23px;width:263px;height:23px;background:linear-gradient(#86a9d8,#6f97cb)"></div>
<span class="t" style="left:22px;top:26px;color:#fff">X Server Display Configuration</span>
<span class="t" style="left:22px;top:49px;color:#1a1a1a">X Screen 0</span>
<svg style="left:2px;top:52px" width="12" height="10" viewBox="0 0 12 10"><path d="M1 1.5h10L6 8z" fill="#fff" stroke="#222" stroke-width="1.3" stroke-linejoin="round"/></svg>
<span class="t" style="left:40px;top:72px;color:#1a1a1a">X Server XVideo Settings</span>
<span class="t" style="left:40px;top:95px;color:#1a1a1a">OpenGL Settings</span>
<span class="t" style="left:40px;top:118px;color:#1a1a1a">OpenGL/GLX Information</span>
<span class="t" style="left:40px;top:141px;color:#1a1a1a">Antialiasing Settings</span>
<span class="t" style="left:40px;top:164px;color:#1a1a1a">VDPAU Information</span>
<span class="t" style="left:22px;top:187px;color:#1a1a1a">GPU 0 - (GeForce GTX 780 Ti)</span>
<svg style="left:2px;top:190px" width="12" height="10" viewBox="0 0 12 10"><path d="M1 1.5h10L6 8z" fill="#fff" stroke="#222" stroke-width="1.3" stroke-linejoin="round"/></svg>
<span class="t" style="left:40px;top:210px;color:#1a1a1a">Thermal Settings</span>
<span class="t" style="left:40px;top:233px;color:#1a1a1a">PowerMizer</span>
<span class="t" style="left:40px;top:256px;color:#1a1a1a">DFP-3 - (Ancor Communications Inc ASUS VH238)</span>
<span class="t" style="left:22px;top:279px;color:#1a1a1a">GPU 1 - (Tesla K40c)</span>
<svg style="left:2px;top:282px" width="12" height="10" viewBox="0 0 12 10"><path d="M1 1.5h10L6 8z" fill="#fff" stroke="#222" stroke-width="1.3" stroke-linejoin="round"/></svg>
<span class="t" style="left:40px;top:302px;color:#1a1a1a">Thermal Settings</span>
<span class="t" style="left:40px;top:325px;color:#1a1a1a">PowerMizer</span>
<span class="t" style="left:40px;top:348px;color:#1a1a1a">ECC Settings</span>
<span class="t" style="left:22px;top:371px;color:#1a1a1a">GPU 2 - (Tesla K40c)</span>
<svg style="left:2px;top:374px" width="12" height="10" viewBox="0 0 12 10"><path d="M1 1.5h10L6 8z" fill="#fff" stroke="#222" stroke-width="1.3" stroke-linejoin="round"/></svg>
<span class="t" style="left:40px;top:394px;color:#1a1a1a">Thermal Settings</span>
<span class="t" style="left:40px;top:417px;color:#1a1a1a">PowerMizer</span>
<span class="t" style="left:40px;top:440px;color:#1a1a1a">ECC Settings</span>
<span class="t" style="left:22px;top:463px;color:#1a1a1a">GPU 3 - (Tesla K40c)</span>
<svg style="left:2px;top:466px" width="12" height="10" viewBox="0 0 12 10"><path d="M1 1.5h10L6 8z" fill="#fff" stroke="#222" stroke-width="1.3" stroke-linejoin="round"/></svg>
<span class="t" style="left:40px;top:486px;color:#1a1a1a">Thermal Settings</span>
<span class="t" style="left:40px;top:509px;color:#1a1a1a">PowerMizer</span>
<span class="t" style="left:40px;top:532px;color:#1a1a1a">ECC Settings</span>
<span class="t" style="left:22px;top:555px;color:#1a1a1a">Application Profiles</span>
<span class="t" style="left:22px;top:578px;color:#1a1a1a">nvidia-settings Configuration</span>
</div>
<div style="left:275px;top:34px;width:15px;height:582px;background:#d4d2cf;border:1px solid #9c9a95;border-radius:3px"></div>
<div style="left:275px;top:49px;width:15px;height:536px;background:linear-gradient(90deg,#a8c4e8,#8fb1de 50%,#7ea3d4);border:1px solid #5f86ba"></div>
<div style="left:275px;top:34px;width:15px;height:15px;background:linear-gradient(#fff,#e8e7e5);border:1px solid #9c9a95;border-radius:3px 3px 0 0"></div>
<div style="left:275px;top:601px;width:15px;height:15px;background:linear-gradient(#fff,#e8e7e5);border:1px solid #9c9a95;border-radius:0 0 3px 3px"></div>
<svg style="left:278px;top:39px" width="9" height="6" viewBox="0 0 9 6"><path d="M1 5l3.5-3.5L8 5" stroke="#aaa" stroke-width="1.4" fill="none"/></svg>
<svg style="left:278px;top:606px" width="9" height="6" viewBox="0 0 9 6"><path d="M1 1l3.5 3.5L8 1" stroke="#222" stroke-width="1.6" fill="none"/></svg>
<svg style="left:279px;top:313px" width="7" height="8" viewBox="0 0 7 8"><path d="M0 1.5h7M0 4h7M0 6.5h7" stroke="#5f86ba" stroke-width="1"/></svg>
<div style="left:10px;top:618px;width:263px;height:15px;background:#d4d2cf;border:1px solid #9c9a95;border-radius:3px"></div>
<div style="left:24px;top:618px;width:167px;height:15px;background:linear-gradient(#a8c4e8,#8fb1de 50%,#7ea3d4);border:1px solid #5f86ba"></div>
<div style="left:10px;top:618px;width:15px;height:15px;background:linear-gradient(#fff,#e8e7e5);border:1px solid #9c9a95;border-radius:3px 0 0 3px"></div>
<div style="left:257px;top:618px;width:16px;height:15px;background:linear-gradient(#fff,#e8e7e5);border:1px solid #9c9a95;border-radius:0 3px 3px 0"></div>
<svg style="left:14px;top:621px" width="6" height="9" viewBox="0 0 6 9"><path d="M5 1L1.5 4.5L5 8" stroke="#aaa" stroke-width="1.4" fill="none"/></svg>
<svg style="left:261px;top:621px" width="6" height="9" viewBox="0 0 6 9"><path d="M1 1l3.5 3.5L1 8" stroke="#222" stroke-width="1.6" fill="none"/></svg>
<svg style="left:103px;top:622px" width="8" height="7" viewBox="0 0 8 7"><path d="M1.5 0v7M4 0v7M6.5 0v7" stroke="#5f86ba" stroke-width="1"/></svg>
<svg style="left:294px;top:308px" width="4" height="20" viewBox="0 0 4 20"><g fill="#a8a6a1"><rect x="0" y="1" width="1" height="1"/><rect x="2" y="3" width="1" height="1"/><rect x="0" y="5" width="1" height="1"/><rect x="2" y="7" width="1" height="1"/><rect x="0" y="9" width="1" height="1"/><rect x="2" y="11" width="1" height="1"/><rect x="0" y="13" width="1" height="1"/><rect x="2" y="15" width="1" height="1"/><rect x="0" y="17" width="1" height="1"/></g></svg>
<div style="left:300px;top:32px;width:522px;height:64px;border:1px solid #a8a6a1;background:#fff;box-shadow:1px 1px 0 #fff"></div>
<svg style="left:302px;top:34px" width="518" height="60" viewBox="1173 337 518 60">
<defs>
<linearGradient id="bg1" x1="0" y1="337" x2="0" y2="397" gradientUnits="userSpaceOnUse"><stop offset="0" stop-color="#226410"/><stop offset=".35" stop-color="#37921c"/><stop offset=".8" stop-color="#4ab822"/><stop offset="1" stop-color="#52c526"/></linearGradient>
<linearGradient id="bg2" x1="1300" y1="0" x2="1691" y2="0" gradientUnits="userSpaceOnUse"><stop offset="0" stop-color="#2a7a14"/><stop offset=".35" stop-color="#1d6010"/><stop offset=".7" stop-color="#0f3f08"/><stop offset="1" stop-color="#082604"/></linearGradient>
<linearGradient id="bg3" x1="0" y1="337" x2="0" y2="397" gradientUnits="userSpaceOnUse"><stop offset="0" stop-color="#000" stop-opacity=".35"/><stop offset="1" stop-color="#2f8a16" stop-opacity=".25"/></linearGradient>
<linearGradient id="scr" x1="0" y1="0" x2="1" y2="1"><stop offset="0" stop-color="#4a6cae"/><stop offset=".5" stop-color="#27479a"/><stop offset="1" stop-color="#1c3684"/></linearGradient>
<linearGradient id="lg" x1="0" y1="0" x2="1" y2="1"><stop offset="0" stop-color="#d8f88a"/><stop offset=".5" stop-color="#9fd82a"/><stop offset="1" stop-color="#6aa00c"/></linearGradient>
</defs>
<rect x="1173" y="337" width="518" height="60" fill="url(#bg1)"/>
<path d="M1300 337C1380 345 1450 365 1510 397H1691V337Z" fill="url(#bg2)"/>
<path d="M1300 337C1380 345 1450 365 1510 397H1691V337Z" fill="url(#bg3)"/>
<path d="M1300 337C1380 345 1450 365 1510 397H1560C1480 360 1400 342 1330 337Z" fill="#3a9a1e" fill-opacity=".35"/>
<!-- crt white -->
<path d="M1193 354l9-7v37l-6-7z" fill="#c4c4cc"/><path d="M1196 352l6-5v38l-5-4z" fill="#dedee4"/>
<ellipse cx="1216" cy="386.5" rx="15" ry="4.6" fill="#e8e8ee"/><path d="M1208 384l16-3v4l-14 3z" fill="#222"/>
<path d="M1201 346.5l40-4.5 2 37-34 7.5z" fill="#f0f0f4"/><path d="M1201 346.5l8 40 -7-2z" fill="#d0d0d8"/>
<path d="M1210 349.5l28-3.3 1 26.5-26 6.3z" fill="url(#scr)"/>
<!-- lcd -->
<path d="M1270 383l16-3 3 8-13 3.5-12-3z" fill="#eeeef2"/><path d="M1272 380h12v5h-12z" fill="#d4d4dc"/>
<path d="M1260 347l34-4 2.5 33-33 7z" fill="#ececf2"/><path d="M1260 347l3.5 36-2.500-1z" fill="#c8c8d0"/>
<path d="M1265 350l26-3 1.200 25-25 6z" fill="url(#scr)"/>
<!-- tv dark -->
<path d="M1313 352l8-4 2 40-7-8z" fill="#2c2c34"/>
<path d="M1321 348l43-4.500 1.500 38.500-42.500 6.500z" fill="#50505a"/><path d="M1323 383l42.500-6v5l-42 6.500z" fill="#3c3c46"/>
<path d="M1333 351.500l28-3.200 .5 27-27.500 5z" fill="url(#scr)"/>
<rect x="1334" y="383" width="4" height="1.600" fill="#e8e8e8"/>
<!-- logo -->
<rect x="1645" y="347.500" width="24" height="24.500" fill="url(#lg)"/>
<path d="M1631 358.500C1636 351 1645 348.500 1656 350.500C1662 352 1666 355 1668 358C1663 365 1655 369.500 1646 368.500C1639 367.500 1634 363.500 1631 358.500Z" fill="#8cc818"/>
<path d="M1645 350v19c4 .8 9 0 13-2l-13-17z" fill="#8cc818" opacity="0"/>
<path d="M1636.500 358.500C1640 354 1646 352.500 1652 353.500C1657 354.500 1660 356.500 1662 358.500C1658 363 1652 366 1646 365.200C1642 364.500 1639 362 1636.500 358.500Z" fill="none" stroke="#123a06" stroke-width="2"/>
<path d="M1643 358.700C1645 356.500 1648 356 1651 356.800C1653 357.500 1654 358.500 1654.500 359.500C1652.500 361.500 1649.500 362.500 1647 362C1645 361.500 1644 360.200 1643 358.700Z" fill="none" stroke="#123a06" stroke-width="1.600"/>
<path d="M1655 362L1668.500 362V369C1664 369 1658 367 1655 362Z" fill="#123a06" opacity=".85"/>
<text x="1627" y="387" font-family="Liberation Sans" font-weight="700" font-size="12.500" fill="#f4f4f4" textLength="50" lengthAdjust="spacingAndGlyphs">nVIDIA.</text>
</svg>
<div style="left:300px;top:110px;width:521px;height:249px;border:1px solid #bdbbb6;border-radius:3px;box-shadow:inset 1px 1px 0 #fff, 1px 1px 0 #fff"></div>
<span class="t" style="left:303px;top:101px;background:#edeceb;padding:0 2px">Layout</span>
<div style="left:307px;top:123px;width:509px;height:226px;background:#ababab;border:2px solid #000;border-width:2px 1px 1px 2px;box-shadow:0 0 0 1px #f8f8f8"></div>
<div style="left:317px;top:133px;width:365px;height:206px;background:#dcdcf5;border:2px solid #ff8080;outline:1px solid #000;outline-offset:0"></div>
<span class="t b" style="left:318px;width:363px;text-align:center;top:218px;font-size:14px;letter-spacing:.72px;color:#000">Ancor Communications Inc ASUS VH238</span>
<span class="t b" style="left:318px;width:363px;text-align:center;top:235px;font-size:14px;letter-spacing:.72px;color:#000">1920x1080</span>
<span class="t" style="left:305px;top:377px">Selection:</span>
<div class="cb" style="left:407px;top:371px;width:414px;height:29px"><span class="t" style="letter-spacing:.12px">Ancor Communications Inc ASUS VH238 (DFP-3 on GPU-0)</span><i></i><svg width="10" height="14" viewBox="0 0 10 14"><path d="M1.5 5L5 1.5L8.5 5M1.5 9L5 12.5L8.5 9" stroke="#222" stroke-width="1.5" fill="none"/></svg></div>
<span class="t" style="left:305px;top:418px">Configuration:</span>
<div class="cb" style="left:407px;top:412px;width:414px;height:29px"><span class="t">X screen 0</span><i></i><svg width="10" height="14" viewBox="0 0 10 14"><path d="M1.5 5L5 1.5L8.5 5M1.5 9L5 12.5L8.5 9" stroke="#222" stroke-width="1.5" fill="none"/></svg></div>
<span class="t" style="left:305px;top:454px">Resolution:</span>
<div class="cb" style="left:407px;top:448px;width:248px;height:29px"><span class="t">Auto</span><i></i><svg width="10" height="14" viewBox="0 0 10 14"><path d="M1.5 5L5 1.5L8.5 5M1.5 9L5 12.5L8.5 9" stroke="#222" stroke-width="1.5" fill="none"/></svg></div>
<div class="cb dis" style="left:662px;top:448px;width:159px;height:29px"><span class="t">Auto</span><i></i><svg width="10" height="14" viewBox="0 0 10 14"><path d="M1.5 5L5 1.5L8.5 5M1.5 9L5 12.5L8.5 9" stroke="#222" stroke-width="1.5" fill="none"/></svg></div>
<span class="t" style="left:305px;top:490px">Orientation:</span>
<div class="cb" style="left:407px;top:484px;width:150px;height:29px"><span class="t">No Rotation</span><i></i><svg width="10" height="14" viewBox="0 0 10 14"><path d="M1.5 5L5 1.5L8.5 5M1.5 9L5 12.5L8.5 9" stroke="#222" stroke-width="1.5" fill="none"/></svg></div>
<div class="cb" style="left:564px;top:484px;width:257px;height:29px"><span class="t">No Reflection</span><i></i><svg width="10" height="14" viewBox="0 0 10 14"><path d="M1.5 5L5 1.5L8.5 5M1.5 9L5 12.5L8.5 9" stroke="#222" stroke-width="1.5" fill="none"/></svg></div>
<span class="t" style="left:305px;top:524px">Underscan:</span>
<div style="left:407px;top:520px;width:56px;height:25px;background:#fff;border:1px solid #8a8884;border-radius:3px;box-shadow:inset 0 1px 1px rgba(0,0,0,.12)"><span class="t" style="left:5px;top:4px">0</span></div>
<div style="left:476px;top:530px;width:340px;height:5px;background:#c4c2be;border:1px solid #9c9a95;border-radius:2px"></div>
<div style="left:475px;top:526px;width:21px;height:13px;border:1px solid #8a8884;border-radius:3px;background:linear-gradient(#fff,#dddcda)"></div>
<svg style="left:482px;top:530px" width="8" height="6" viewBox="0 0 8 6"><path d="M1.5 0v6M4 0v6M6.5 0v6" stroke="#777" stroke-width="1"/></svg>
<div style="left:300px;top:561px;width:521px;height:2px;background:#c9c7c3;border-bottom:1px solid #fff"></div>
<div class="bt dis" style="left:508px;top:574px;width:47px;height:27px"><span class="t">Apply</span></div>
<div class="bt" style="left:562px;top:574px;width:113px;height:27px"><span class="t">Detect Displays</span></div>
<div class="bt" style="left:682px;top:574px;width:86px;height:27px"><span class="t">Advanced...</span></div>
<div class="bt" style="left:775px;top:574px;width:46px;height:27px"><span class="t">Reset</span></div>
<div class="bt" style="left:631px;top:608px;width:190px;height:27px"><span class="t">Save to X Configuration File</span></div>
<div style="left:8px;top:641px;width:605px;height:2px;background:#c9c7c3;border-bottom:1px solid #fff"></div>
<div class="bt" style="left:620px;top:642px;width:98px;height:27px"><span class="t">Help</span></div>
<div class="bt" style="left:725px;top:642px;width:97px;height:27px"><span class="t">Quit</span></div>
</div>

<!--BOTTOM-->
<div id="bot" class="abs">
<style>
.tk{top:1px;height:22px;border:1px solid #a19f9a;border-radius:3px;background:linear-gradient(#fdfdfc,#f0efee 45%,#e4e3e1);box-shadow:inset 0 0 0 1px rgba(255,255,255,.6)}
.tk .t{left:30px;top:2px}
.tk.act{background:linear-gradient(#c4c3c0,#d2d1ce 40%,#dad9d6);border-color:#8f8d88;box-shadow:inset 0 1px 2px rgba(0,0,0,.18)}
.ws{top:0;height:20px;width:50px;background:#aaa8a4;border-right:1px solid #8a8884;box-shadow:inset 1px 0 0 #c4c2be}
.ws .t{left:0;width:49px;text-align:center;top:2px;letter-spacing:.05px;font-size:13.5px}
</style>
<div style="left:2px;top:1px;width:22px;height:22px;border:1px solid #8f8d88;border-radius:4px;background:linear-gradient(#ffffff,#f1f0ef 50%,#e6e5e3)"></div>
<svg style="left:4px;top:4px" width="18" height="17" viewBox="0 0 18 17"><path d="M1.500 3.500c0-1 .5-1.500 1.500-1.500h4.500l1.500 1.800h6c1 0 1.500 .5 1.500 1.500v8.700c0 1-.5 1.500-1.500 1.500h-12c-1 0-1.500-.5-1.500-1.500z" fill="#6c9ad8" stroke="#3f6cb0" stroke-width=".9"/><path d="M2.200 3.200h5l1 1.300h-6z" fill="#a8c6ee"/><path d="M4 7.500v-1.500h1.800M12.200 6h1.800v1.500M14 11.500v1.500h-1.800M5.800 13h-1.800v-1.500" stroke="#2f5aa0" stroke-width="1.100" fill="none"/><rect x="7" y="7.800" width="4" height="3.800" rx=".8" fill="#a8c6ee" stroke="#2f5aa0" stroke-width=".9"/></svg>
<svg style="left:36px;top:3px" width="6" height="20" viewBox="0 0 6 20"><g fill="#b0aea8"><rect x="0" y="1" width="1" height="1"/><rect x="2" y="3" width="1" height="1"/><rect x="0" y="5" width="1" height="1"/><rect x="2" y="7" width="1" height="1"/><rect x="0" y="9" width="1" height="1"/><rect x="2" y="11" width="1" height="1"/><rect x="0" y="13" width="1" height="1"/><rect x="2" y="15" width="1" height="1"/><rect x="0" y="17" width="1" height="1"/></g></svg>
<div class="tk act" style="left:44px;width:198px"><div class="wicon" style="left:10px;top:5px;width:12px;height:10px"></div><span class="t" style="left:32px">gmv</span></div>
<div class="tk" style="left:245px;width:198px"><svg style="left:7px;top:3px" width="16" height="15" viewBox="0 0 16 15"><rect x=".5" y=".5" width="15" height="13.500" rx="1.500" fill="#9a9a96" stroke="#55554f"/><rect x="2.500" y="2.500" width="11" height="8.500" fill="#d8d8d4"/><path d="M4 4.500l2.500 2-2.500 2M7.500 9h3" stroke="#444" stroke-width="1" fill="none"/></svg><span class="t">[lobo@newton:~]</span></div>
<div class="tk" style="left:446px;width:200px"><svg style="left:6px;top:5px" width="17" height="12" viewBox="0 0 17 13"><path d="M0 6C3 1 8 0 16 0V12H6C3 11 1 9 0 6Z" fill="#76b900"/><path d="M2 6C4 3 7 2 11 2.500M3.500 6.500C5 4.500 8 4 10 5C11 6 10 8 8 8C6.500 8 6 7 6.500 6M4 8C6 10.500 10 10.500 13 8" stroke="#fff" stroke-width="1" fill="none" opacity=".9"/></svg><span class="t">NVIDIA X Server Settings</span></div>
<div style="left:1585px;top:2px;width:300px;height:20px;border-radius:4px;background:#aaa8a4;overflow:hidden">
 <div class="ws" style="left:0;top:0;background:#4a78b8;box-shadow:none"><span class="t" style="color:#fff">Case 1</span></div>
 <div class="ws" style="left:50px;top:0"><span class="t">Case 2</span></div>
 <div class="ws" style="left:100px;top:0"><span class="t">Case 3</span></div>
 <div class="ws" style="left:150px;top:0"><span class="t">Case 4</span></div>
 <div class="ws" style="left:200px;top:0"><span class="t">Plots</span></div>
 <div class="ws" style="left:250px;top:0;width:50px;border-right:none"><span class="t" style="width:50px">Manual</span></div>
</div>
<svg style="left:1896px;top:1px" width="24" height="24" viewBox="0 0 24 24"><path d="M2.500 7h19l-1.500 15h-16z" fill="#3f74c4" stroke="#2a4f90" stroke-width=".8"/><path d="M2 5h20v3h-20z" fill="#5a8cd4" stroke="#2a4f90" stroke-width=".6"/><path d="M6 5l3-3 4 2 4-2 3 3z" fill="#e8e8ec"/></svg>

</div>
</body></html>
